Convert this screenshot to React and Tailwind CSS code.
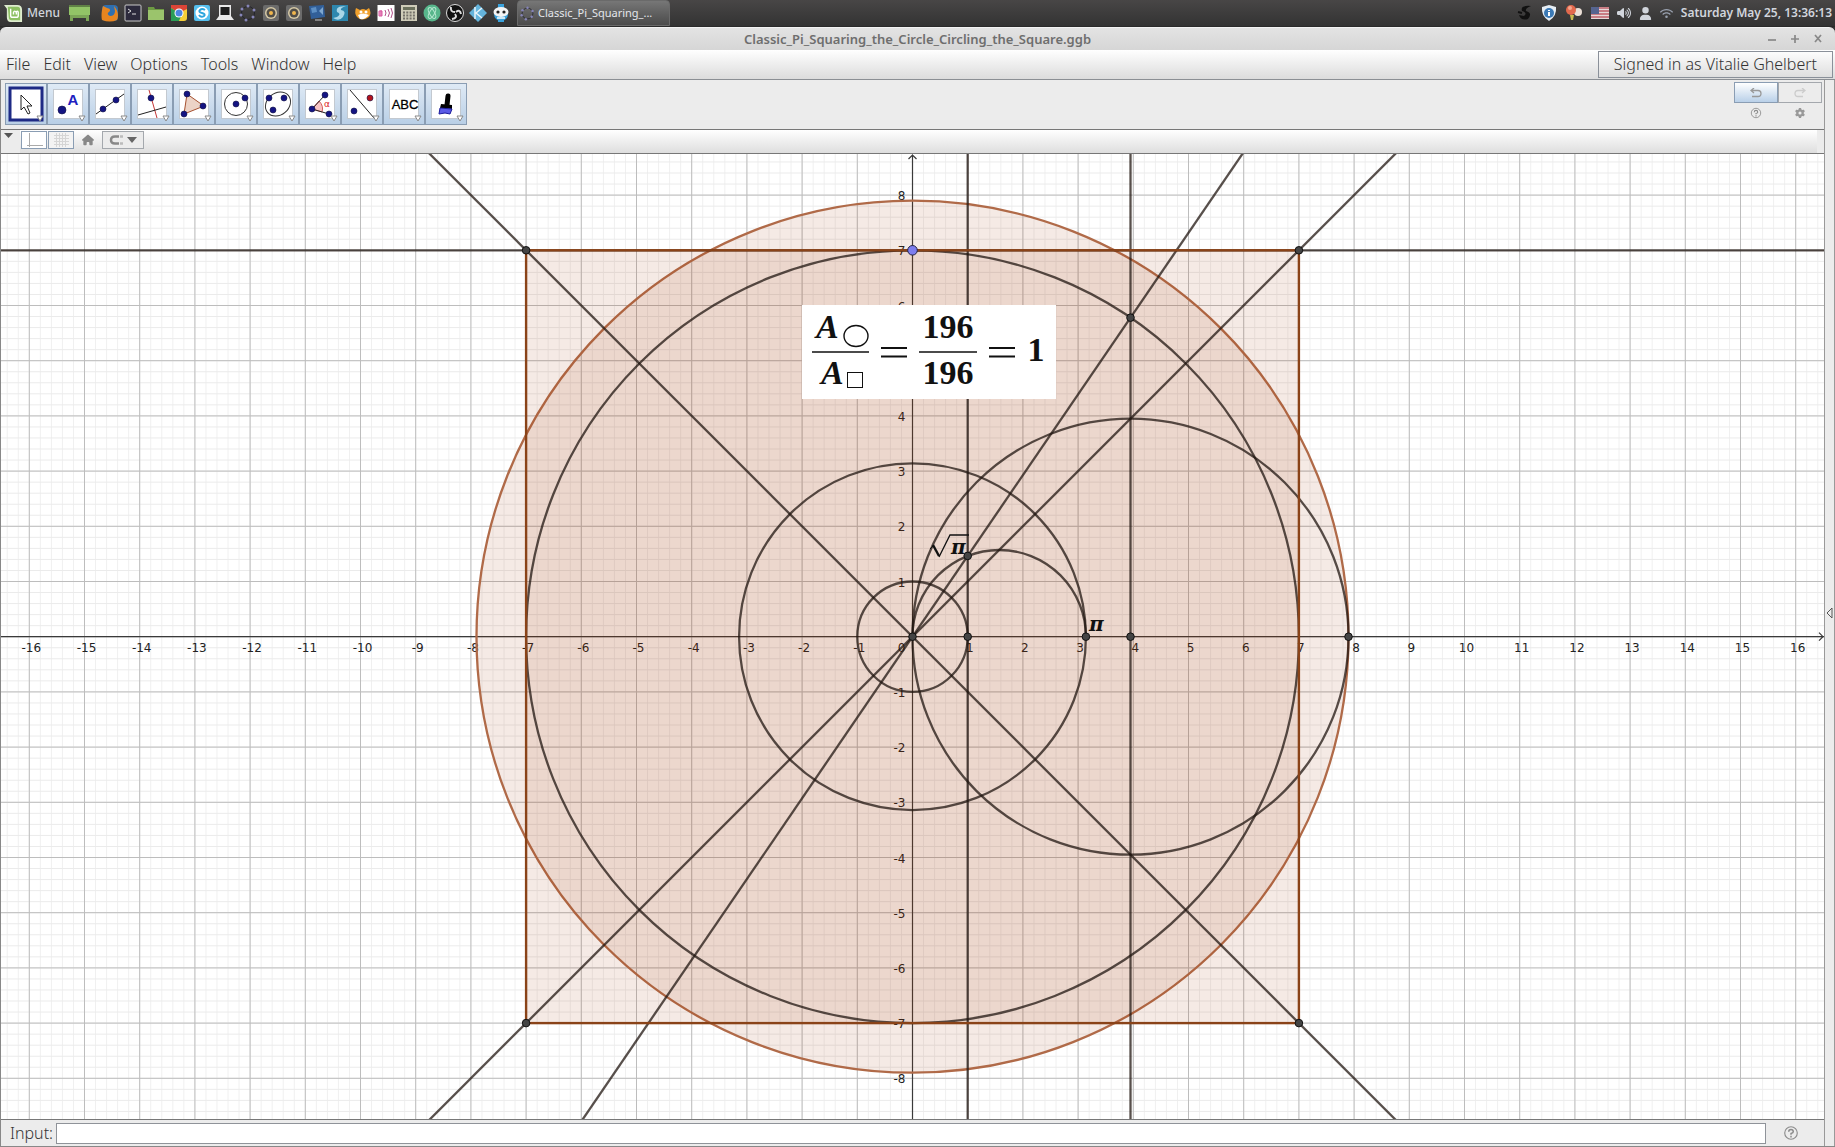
import { FaHouse, FaUser, FaWifi, FaVolumeHigh, FaGear } from 'react-icons/fa6'

// ── Plot geometry ─────────────────────────────────────────────────────────────

const W = 1823
const H = 965
const UNIT = 55.2
const OX = 911.5
const OY = 482.7

const px = (x) => OX + x * UNIT
const py = (y) => OY - y * UNIT

const ROOT = Math.sqrt(Math.PI - 1)
const A = 7 / Math.sqrt(Math.PI)

const range = (from, to) => Array.from({ length: to - from + 1 }, (_, i) => from + i)

const circles = [
    { x: 0, y: 0, r: 1 },
    { x: 0, y: 0, r: Math.PI },
    { x: 0, y: 0, r: 7 },
    { x: A, y: 0, r: A },
]

const lines = [
    [-20, 7, 20, 7],
    [1, -10, 1, 10],
    [A, -10, A, 10],
    [-10, -10, 10, 10],
    [-10, 10, 10, -10],
    [-10, -10 * ROOT, 10, 10 * ROOT],
]

const points = [
    [-7, 7], [7, 7], [-7, -7], [7, -7],
    [0, 0], [1, 0], [1, ROOT], [Math.PI, 0], [A, 0], [A, A * ROOT], [2 * A, 0],
]

function Grid() {
    return (
        <g>
            {range(-82, 82).map((i) => (
                <line key={`mv${i}`} x1={px(i / 5)} x2={px(i / 5)} y1="0" y2={H} stroke="#f0f0f0" />
            ))}
            {range(-43, 43).map((i) => (
                <line key={`mh${i}`} x1="0" x2={W} y1={py(i / 5)} y2={py(i / 5)} stroke="#ebebeb" />
            ))}
            {range(-16, 16).map((i) => (
                <line key={`v${i}`} x1={px(i)} x2={px(i)} y1="0" y2={H} stroke="#bdbdbd" />
            ))}
            {range(-8, 8).map((i) => (
                <line key={`h${i}`} x1="0" x2={W} y1={py(i)} y2={py(i)} stroke="#bdbdbd" />
            ))}
        </g>
    )
}

function Axes() {
    return (
        <g>
            <g stroke="#3a3a3a" strokeWidth="1.2" fill="none">
                <path d={`M0 ${OY}H${W}M${W - 5} ${OY - 4}L${W - 1} ${OY}L${W - 5} ${OY + 4}`} />
                <path d={`M${OX} ${H}V1M${OX - 4} 5L${OX} 1L${OX + 4} 5`} />
            </g>
            <g className="font-['DejaVu_Sans']" fontSize="12" fill="#222">
                {range(-16, 16).filter((i) => i !== 0).map((i) => (
                    <text key={i} x={px(i) + 2} y={OY + 15} textAnchor="middle">{i}</text>
                ))}
                {range(-8, 8).filter((i) => i !== 0).map((i) => (
                    <text key={i} x={OX - 7} y={py(i) + 5} textAnchor="end">{i}</text>
                ))}
                <text x={OX - 7} y={OY + 15} textAnchor="end">0</text>
            </g>
        </g>
    )
}

function Formula() {
    return (
        <g transform="translate(801 151)">
            <rect width="254" height="94" fill="#fff" />
            <g className="font-['Liberation_Serif']" fontWeight="700" fontSize="34" fill="#111">
                <text x="14" y="33" fontStyle="italic">A</text>
                <text x="19" y="79" fontStyle="italic">A</text>
                <text x="146" y="33" textAnchor="middle">196</text>
                <text x="146" y="79" textAnchor="middle">196</text>
                <text x="234" y="56" textAnchor="middle">1</text>
            </g>
            <g fill="none" stroke="#111">
                <ellipse cx="54" cy="31" rx="12" ry="10.5" strokeWidth="1.4" />
                <rect x="45.5" y="67.5" width="15" height="15" />
                <path d="M10 47H67M117 47H175" strokeWidth="1.3" />
                <path d="M79 43H105M79 51.5H105M187 43H213M187 51.5H213" strokeWidth="2.2" />
            </g>
        </g>
    )
}

function Plot() {
    return (
        <svg viewBox={`0 0 ${W} ${H}`} preserveAspectRatio="xMidYMid slice" className="block h-full w-full bg-white">
            <Grid />
            <Axes />
            <g fill="#993300" fillOpacity="0.1">
                <circle cx={OX} cy={OY} r={2 * A * UNIT} stroke="#b06a48" strokeWidth="2.3" />
                <rect x={px(-7)} y={py(7)} width={14 * UNIT} height={14 * UNIT} />
            </g>
            <g fill="none" stroke="#201510" strokeOpacity="0.75" strokeWidth="2.3">
                {circles.map((c, i) => (
                    <circle key={i} cx={px(c.x)} cy={py(c.y)} r={c.r * UNIT} />
                ))}
                <path d={`M${px(0)} ${OY}A${(Math.PI / 2) * UNIT} ${(Math.PI / 2) * UNIT} 0 0 1 ${px(Math.PI)} ${OY}`} />
                {lines.map(([x1, y1, x2, y2], i) => (
                    <line key={i} x1={px(x1)} y1={py(y1)} x2={px(x2)} y2={py(y2)} />
                ))}
            </g>
            <rect x={px(-7)} y={py(7)} width={14 * UNIT} height={14 * UNIT} fill="none" stroke="#8a4318" strokeWidth="2.4" />
            {points.map(([x, y], i) => (
                <circle key={i} cx={px(x)} cy={py(y)} r="3.8" fill="#444" stroke="#111" />
            ))}
            <circle cx={px(0)} cy={py(7)} r="4.8" fill="#7d7dee" stroke="#222244" />
            <g className="font-['DejaVu_Serif']" fontSize="20" fontWeight="700" fontStyle="italic" fill="#111">
                <text x="1088" y="477">π</text>
                <text x="950" y="400">π</text>
            </g>
            <path d="M929 395L933 391" stroke="#111" fill="none" />
            <path d="M932 391L938 402" stroke="#111" strokeWidth="2.4" fill="none" />
            <path d="M938 403L949 381H968" stroke="#111" strokeWidth="1.3" fill="none" />
            <Formula />
        </svg>
    )
}

// ── Desktop panel ─────────────────────────────────────────────────────────────

const launchers = [
    { name: 'Firefox', art: <><rect x="1" y="1" width="16" height="16" rx="4" fill="#2f6fb0" /><path d="M1 6L2 2L6 4Q11 5 8 8Q5 10 9 12Q14 12 14 7L13 2Q19 9 16 16Q9 19 1 16Q0 12 1 6" fill="#e8851f" /></> },
    { name: 'Terminal', art: <><rect x="1" y="1" width="16" height="16" rx="1" fill="#2c2a3c" stroke="#c9c9c9" /><path d="M4 5L7 7L4 9M8 10H12" stroke="#ddd" fill="none" /></> },
    { name: 'Files', art: <><path d="M1 3H7L8 5H17V16H1Z" fill="#6d9a43" /><rect x="1" y="6" width="16" height="10" fill="#9bc46c" /></> },
    { name: 'Chrome', art: <><rect x="1" y="1" width="16" height="16" rx="3" fill="#f6cf38" /><path d="M9 9L1 4V1H17V5Z" fill="#db4437" /><path d="M9 9L1 4V17H9L12 10Z" fill="#2a9d57" /><circle cx="9" cy="9" r="4.5" fill="#fff" /><circle cx="9" cy="9" r="3.5" fill="#4c86e0" /></> },
    { name: 'Skype', art: <><rect x="1" y="1" width="16" height="16" rx="2" fill="#55bfee" /><circle cx="9" cy="9" r="6.5" fill="#fff" /><path d="M12 6Q9 4 7 6T9 9T11 12Q8 14 6 11" stroke="#2ba5dd" strokeWidth="2" fill="none" /></> },
    { name: 'Screen', art: <><path d="M3 1H15V12L18 16H0L3 12Z" fill="#e9e9e9" /><rect x="4.5" y="3" width="9" height="8" fill="#1d1d1d" /></> },
    { name: 'GeoGebra', art: <><circle cx="9" cy="9" r="6.5" fill="none" stroke="#22222c" /><g fill="#8685b8"><circle cx="9" cy="2" r="1.5" /><circle cx="15" cy="6" r="1.5" /><circle cx="14" cy="13" r="1.5" /><circle cx="7" cy="16" r="1.5" /><circle cx="2" cy="11" r="1.5" /><circle cx="3" cy="5" r="1.5" /></g></> },
    { name: 'Audio', art: <><rect x="1" y="1" width="16" height="16" rx="2" fill="#6b6b6b" /><circle cx="9" cy="9" r="6" fill="#d6c9a6" /><circle cx="9" cy="9" r="4.5" fill="#514e48" /><circle cx="9" cy="9" r="2" fill="#f0b64d" /></> },
    { name: 'Mixer', art: <><rect x="1" y="1" width="16" height="16" rx="2" fill="#6b6b6b" /><circle cx="9" cy="9" r="6" fill="#d6c9a6" /><circle cx="9" cy="9" r="4.5" fill="#514e48" /><circle cx="9" cy="9" r="2" fill="#f0b64d" /></> },
    { name: 'Display', art: <><path d="M1 2L16 1L17 13L3 15Z" fill="#315f99" /><path d="M3 4L8 3L9 8L4 9Z" fill="#5d8fc4" /><path d="M11 7L15 3V11Z" fill="#7fa8d0" /><path d="M7 16H14" stroke="#ccc" /></> },
    { name: 'Sync', art: <><rect x="1" y="1" width="16" height="16" fill="#2e87ae" /><path d="M15 2Q4 2 6 8Q11 10 6 13L2 14Q8 18 12 13Q16 7 10 6Q9 4 15 2" fill="#a9d6e8" /></> },
    { name: 'Scratch', art: <><path d="M2 4L6 6Q9 4 12 6L15 4Q18 9 15 13Q8 18 3 13Q0 9 2 4" fill="#f0a02c" /><path d="M4 11Q9 8 15 11Q11 16 6 15" fill="#fff" /><circle cx="7" cy="8" r="1.5" fill="#fff" /><circle cx="12" cy="8" r="1.5" fill="#fff" /></> },
    { name: 'Speech', art: <><rect x="0.5" y="1" width="17" height="16" fill="#fff" /><path d="M2 7H5V12H2ZM4 6V12" stroke="#d858a0" fill="#f2a8d0" /><path d="M8 6Q10 9 8 12M11 5Q14 9 11 13M14 4Q17 9 14 14" stroke="#b3528b" fill="none" /></> },
    { name: 'Calculator', art: <><rect x="1" y="1" width="16" height="16" fill="#cfccb9" /><rect x="3" y="3" width="12" height="3" fill="#6c715d" /><path d="M3 8.5H15M3 11.5H15M3 14.5H15" stroke="#74716a" strokeWidth="2" strokeDasharray="2 1.3" /></> },
    { name: 'Atom', art: <><circle cx="9" cy="9" r="8.5" fill="#57b68b" /><g fill="none" stroke="#b5e6cf"><ellipse cx="9" cy="9" rx="6" ry="2.5" transform="rotate(60 9 9)" /><ellipse cx="9" cy="9" rx="6" ry="2.5" transform="rotate(-60 9 9)" /></g></> },
    { name: 'OBS', art: <><circle cx="9" cy="9" r="8.5" fill="#111" stroke="#ddd" /><path d="M9 8Q4 8 5 3M10 8Q14 5 15 10M9 10Q12 14 6 15" stroke="#ddd" strokeWidth="2" fill="none" /></> },
    { name: 'Kodi', art: <><path d="M9 0L18 9L9 18L0 9Z" fill="#64b4dc" /><path d="M6 3V15M7 9L13 4M7 9L13 14" stroke="#e8f5fb" strokeWidth="1.5" /></> },
    { name: 'Panda', art: <><rect x="6" y="0" width="6" height="18" fill="#3aa2dc" /><circle cx="9" cy="10" r="7" fill="#3aa2dc" /><ellipse cx="9" cy="8" rx="7.5" ry="5" fill="#f4f4f4" /><circle cx="6" cy="8" r="1.6" fill="#222" /><circle cx="12" cy="8" r="1.6" fill="#222" /><path d="M5 14H13" stroke="#cde9f7" strokeWidth="2" /></> },
]

function Launcher({ name, art }) {
    return (
        <button type="button" aria-label={name} className="h-[18px] w-[18px]">
            <svg viewBox="0 0 18 18" className="block h-full w-full">{art}</svg>
        </button>
    )
}

function Tray() {
    return (
        <div className="ml-auto flex items-center gap-2 pr-[3px] text-gray-300">
            <svg viewBox="0 0 16 16" className="h-4 w-4"><path d="M14 1Q3 0 5 6Q11 8 7 11L2 10Q4 16 11 14Q16 8 9 6Q8 3 14 1" fill="#111" /><path d="M1 7L5 8" stroke="#111" strokeWidth="2" /></svg>
            <svg viewBox="0 0 16 16" className="h-4 w-4"><path d="M8 0L15 2Q16 11 8 16Q0 11 1 2Z" fill="#e6edf4" /><circle cx="8" cy="8" r="5" fill="#3b79b5" /><path d="M8 5V6M8 7V11" stroke="#fff" strokeWidth="2" /></svg>
            <svg viewBox="0 0 18 16" className="h-4 w-[18px]"><circle cx="13" cy="7" r="4" fill="#eadfd6" /><circle cx="6" cy="5" r="5" fill="#e2694d" /><circle cx="5" cy="3" r="2" fill="#f4a58d" /><path d="M5 10H9L8 15H6Z" fill="#c9b94e" /></svg>
            <svg viewBox="0 0 18 12" className="h-3 w-[18px]"><rect width="18" height="12" fill="#e6d8d8" /><path d="M0 1H18M0 4H18M0 7H18M0 10H18" stroke="#c0606a" strokeWidth="1.3" /><rect width="8" height="7" fill="#56648f" /></svg>
            <FaVolumeHigh size={14} />
            <FaUser size={13} />
            <FaWifi size={13} className="text-gray-400" />
            <time className="font-['Noto_Sans'] text-[12px] font-semibold text-gray-300">Saturday May 25, 13:36:13</time>
        </div>
    )
}

function Taskbar() {
    return (
        <header className="flex h-[27px] shrink-0 items-center border-b border-[#2a2a2a] bg-linear-to-b from-[#484646] to-[#333] font-['Noto_Sans']">
            <button type="button" className="flex w-[65px] items-center gap-1 pl-1 text-[12px] font-medium text-gray-300">
                <svg viewBox="0 0 20 20" className="h-[19px] w-[19px] shrink-0">
                    <path d="M0 1H14Q19 1 19 6V19H7Q3 19 3 14V5Z" fill="#dfeccf" />
                    <path d="M4 3H14Q17 3 17 6V17H8Q5 17 5 14Z" fill="#8dc063" />
                    <path d="M7 5V12Q7 14 9 14H13Q15 14 15 12V9Q15 7 13 8V11M13 9Q11 6 10 9V11" fill="none" stroke="#fff" strokeWidth="1.5" />
                </svg>
                Menu
            </button>
            <button type="button" aria-label="Show desktop" className="ml-1 h-[18px] w-[21px]">
                <svg viewBox="0 0 21 18" className="h-full w-full"><rect y="1" width="21" height="10" fill="#92c467" /><path d="M0 2H21" stroke="#4f6b3b" strokeWidth="1.5" /><path d="M1 11H20V17H17V14H4V17H1Z" fill="#7ba557" /></svg>
            </button>
            <nav className="ml-[11px] flex gap-[5px]">
                {launchers.map((l) => <Launcher key={l.name} {...l} />)}
            </nav>
            <button type="button" className="ml-[7px] flex h-full w-[153px] items-center gap-[3px] rounded-t-sm border border-[#6a6a6a] bg-linear-to-b from-[#777] to-[#4b4b4b] pl-[2px] text-[11px] text-gray-200">
                <svg viewBox="0 0 18 18" className="h-[15px] w-[15px] shrink-0">{launchers[6].art}</svg>
                Classic_Pi_Squaring_...
            </button>
            <Tray />
        </header>
    )
}

// ── Tools ─────────────────────────────────────────────────────────────────────

const Dot = ({ x, y, r = 3, fill = '#141482' }) => <circle cx={x} cy={y} r={r} fill={fill} stroke="#111144" strokeWidth="0.6" />

const tools = [
    { name: 'Move', art: <path d="M16 12V27L19 24L23 31L25 30L22 23H27Z" fill="#fff" stroke="#222" /> },
    { name: 'Point', art: <><Dot x="15" y="27" r="4" /><text x="26" y="22" textAnchor="middle" className="font-['Liberation_Sans']" fontSize="15" fontWeight="700" fill="#2020c0">A</text></> },
    { name: 'Line', art: <><path d="M7 31L35 11" stroke="#222" /><Dot x="14" y="26" /><Dot x="27" y="17" /></> },
    { name: 'Perpendicular Line', art: <><path d="M18 7L26 35" stroke="#c43535" /><path d="M7 32L35 24" stroke="#222" /><Dot x="20" y="15" /></> },
    { name: 'Polygon', art: <><path d="M14 11L31 23L11 31Z" fill="#ecd3c6" stroke="#a5502f" /><Dot x="14" y="11" /><Dot x="30" y="23" /><Dot x="11" y="31" /></> },
    { name: 'Circle', art: <><circle cx="21" cy="21" r="11.5" fill="none" stroke="#333" /><Dot x="21" y="21" /><Dot x="30" y="15" /></> },
    { name: 'Ellipse', art: <><ellipse cx="21" cy="21" rx="13.5" ry="11" transform="rotate(-40 21 21)" fill="none" stroke="#333" /><Dot x="12" y="15" /><Dot x="27" y="15" /><Dot x="16" y="27" /></> },
    { name: 'Angle', art: <><path d="M13 26L20 18Q25 23 23 29Z" fill="#f8c4c4" stroke="#d46060" /><path d="M26 12L13 26L30 31" fill="none" stroke="#222" /><Dot x="13" y="26" /><Dot x="26" y="12" /><Dot x="30" y="31" /><text x="28" y="24" textAnchor="middle" className="font-['DejaVu_Sans']" fontSize="9" fill="#d22">α</text></> },
    { name: 'Reflect', art: <><path d="M9 7L33 35" stroke="#222" /><Dot x="29" y="15" fill="#b3131c" /><Dot x="13" y="28" /></> },
    { name: 'Text', art: <text x="22" y="26" textAnchor="middle" className="font-['Liberation_Sans']" fontSize="13" fill="#000" stroke="#000" strokeWidth="0.3">ABC</text> },
    { name: 'Pen', art: <><path d="M23 13L22 22" stroke="#000" strokeWidth="5" strokeLinecap="round" /><path d="M16 21L27 22L27 26L15 25Z" fill="#000" /><path d="M15 25L27 26L25 31L20 30L14 31Z" fill="#5a5ae6" stroke="#1b1b9c" /></> },
]

function ToolButton({ name, art, active }) {
    return (
        <button type="button" aria-label={name} aria-pressed={active} className="h-[42px] w-[42px] border border-[#8a9db3] bg-linear-to-b from-[#dfeaf5] to-[#b9cfe6]">
            <svg viewBox="1 1 40 40" className="h-full w-full">
                <rect x="6.5" y="6.5" width="29" height="29" fill="#fff" stroke="#c3c9d0" />
                {active && <rect x="5" y="5" width="32" height="32" fill="#fff" stroke="#1e2a85" strokeWidth="3" />}
                {art}
                <path d="M32 33H38L35 38Z" fill="#fff" stroke="#8a8a8a" />
            </svg>
        </button>
    )
}

function HelpIcon() {
    return (
        <svg viewBox="0 0 14 14" className="h-full w-full" fill="none" stroke="#8c8c8c">
            <circle cx="7" cy="7" r="5.5" />
            <path d="M5 6Q5 4 7 4T9 6Q9 7 7 7.5V8.5M7 9.5V11" strokeWidth="1.3" />
        </svg>
    )
}

function Toolbar() {
    return (
        <div className="flex h-[50px] items-start justify-between border-b border-[#777] pl-1 pr-[2px] pt-[2px]">
            <div className="flex pt-px">
                {tools.map((t, i) => <ToolButton key={t.name} {...t} active={i === 0} />)}
            </div>
            <div className="grid grid-cols-2">
                <button type="button" aria-label="Undo" className="flex h-[21px] w-[44px] items-center justify-center border border-[#8a9db3] bg-linear-to-b from-white to-[#b9d0e8]">
                    <svg viewBox="0 0 12 10" className="h-[10px] w-3" fill="none" stroke="#999" strokeWidth="1.3"><path d="M4 0L1 2.5L4 5M1 2.5H8Q11 2.5 11 5.5T8 8.5H2" /></svg>
                </button>
                <button type="button" aria-label="Redo" disabled className="flex h-[21px] w-[44px] items-center justify-center border border-[#a4a8ad] bg-[#ececec]">
                    <svg viewBox="0 0 12 10" className="h-[10px] w-3" fill="none" stroke="#ccc" strokeWidth="1.3"><path d="M8 0L11 2.5L8 5M11 2.5H4Q1 2.5 1 5.5T4 8.5H9" /></svg>
                </button>
                <button type="button" aria-label="Help" className="mx-auto mt-1 h-3 w-3"><HelpIcon /></button>
                <button type="button" aria-label="Preferences" className="mx-auto mt-1 text-[#999]"><FaGear size={10} /></button>
            </div>
        </div>
    )
}

function StyleBar() {
    return (
        <div className="flex h-6 border-b border-[#777]">
            <button type="button" aria-label="Toggle style bar" className="h-full w-[19px]">
                <svg viewBox="0 0 19 23" className="h-full w-full"><path d="M3 3H12L7.500 8Z" fill="#555" /></svg>
            </button>
            <div className="mr-[7px] flex flex-1 items-start gap-px bg-linear-to-b from-white to-[#dedede] pl-px pt-px">
                <button type="button" aria-label="Show axes" className="h-[18px] w-[26px] border border-[#8a9db3] bg-white">
                    <svg viewBox="0 0 24 16" className="h-full w-full"><path d="M7.5 1V15M5 13.5H21" stroke="#aaa" /></svg>
                </button>
                <button type="button" aria-label="Show grid" className="h-[18px] w-[26px] border border-[#8a9db3] bg-[#f3f3f3]">
                    <svg viewBox="0 0 24 16" className="h-full w-full"><path d="M5 3.5H20M5 6.5H20M5 9.5H20M5 12.5H20M7.5 1V15M10.5 1V15M13.5 1V15M16.5 1V15" stroke="#d5d5d5" /></svg>
                </button>
                <button type="button" aria-label="Standard view" className="flex h-[18px] w-[26px] items-center justify-center text-[#888]"><FaHouse size={12} /></button>
                <button type="button" aria-label="Point capturing" className="flex h-[18px] w-[42px] items-center justify-center gap-1 border border-[#a4a8ad] bg-[#ececec]">
                    <svg viewBox="0 0 14 12" className="h-3 w-[14px]" fill="none" strokeWidth="2.5"><path d="M10 2.5H6Q2 2.500 2 6T6 9.5H10" stroke="#888" /><path d="M11 2.5H14M11 9.5H14" stroke="#bbb" /></svg>
                    <svg viewBox="0 0 10 6" className="h-[6px] w-[10px]"><path d="M0 0H10L5 6Z" fill="#666" /></svg>
                </button>
            </div>
        </div>
    )
}

// ── Window ────────────────────────────────────────────────────────────────────

const menus = ['File', 'Edit', 'View', 'Options', 'Tools', 'Window', 'Help']

const windowControls = [
    { name: 'Minimize', d: 'M1 6H9' },
    { name: 'Maximize', d: 'M1 5H9M5 1V9' },
    { name: 'Close', d: 'M2 1L8 8M8 1L2 8' },
]

function TitleBar() {
    return (
        <div className="shrink-0 bg-[#333]">
            <div className="relative flex h-[23px] items-center justify-center rounded-t-md border-t border-[#f3f3f3] bg-linear-to-b from-[#e3e3e3] to-[#d6d6d6]">
                <h1 className="text-[13px] font-semibold leading-none text-[#6e6e6e]">Classic_Pi_Squaring_the_Circle_Circling_the_Square.ggb</h1>
                <div className="absolute right-3 flex gap-[13px]">
                    {windowControls.map(({ name, d }) => (
                        <button key={name} type="button" aria-label={name} className="h-[10px] w-[10px]">
                            <svg viewBox="0 0 10 10" className="block"><path d={d} stroke="#888" strokeWidth="1.7" /></svg>
                        </button>
                    ))}
                </div>
            </div>
        </div>
    )
}

export default function App() {
    return (
        <div className="flex h-screen flex-col overflow-hidden bg-[#ececec] font-['Noto_Sans',sans-serif] text-[#333]">
            <Taskbar />
            <TitleBar />
            <div className="flex h-[30px] shrink-0 items-center justify-between border-b border-[#8b8f94] bg-linear-to-b from-white to-[#dcdcdc] pl-[6px] pr-[2px]">
                <nav className="flex gap-[13px] pb-[2px] text-[16px] font-light">
                    {menus.map((m) => <button key={m} type="button">{m}</button>)}
                </nav>
                <button type="button" className="h-[27px] border border-[#8a9099] px-[15px] pb-[2px] text-[16px] font-light leading-none">
                    Signed in as Vitalie Ghelbert
                </button>
            </div>
            <div className="flex min-h-0 flex-1 border-b border-l border-[#888]">
                <main className="flex min-w-0 flex-1 flex-col">
                    <Toolbar />
                    <StyleBar />
                    <div className="min-h-0 flex-1"><Plot /></div>
                    <div className="flex h-[27px] items-center border-t border-[#777] pl-[9px]">
                        <label htmlFor="algebra-input" className="mr-[3px] text-[16px] font-light leading-none">Input:</label>
                        <input id="algebra-input" type="text" className="h-[21px] flex-1 border border-[#8f9399] bg-white px-1 text-[14px] outline-none" />
                        <button type="button" aria-label="Input help" className="ml-[14px] mr-[22px] h-4 w-[22px]"><HelpIcon /></button>
                    </div>
                </main>
                <button type="button" aria-label="Show sidebar" className="w-[11px] shrink-0 border-l border-r border-[#999]">
                    <svg viewBox="0 0 9 14" className="h-[14px] w-[9px]"><path d="M7 2V12L2 7Z" fill="none" stroke="#555" /></svg>
                </button>
            </div>
        </div>
    )
}
